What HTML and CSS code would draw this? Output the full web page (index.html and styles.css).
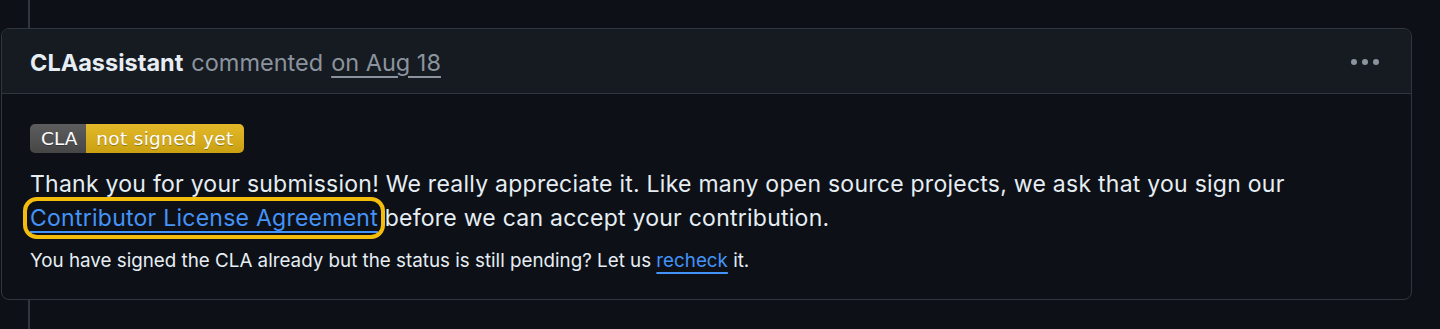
FILE: index.html
```html
<!DOCTYPE html>
<html lang="en">
<head>
<meta charset="utf-8">
<title>CLA comment</title>
<link rel="stylesheet" href="styles.css">
</head>
<body>
<div class="timeline timeline-top"></div>
<div class="comment">
  <div class="comment-header">
    <div class="comment-meta">
      <a class="author" href="#">CLAassistant</a>
      <span class="action">commented</span>
      <a class="date" href="#">on Aug 18</a>
    </div>
    <button class="more" aria-label="More">
      <svg width="30" height="8" viewBox="0 0 30 8"><circle cx="4" cy="4" r="3"/><circle cx="15" cy="4" r="3"/><circle cx="26" cy="4" r="3"/></svg>
    </button>
  </div>
  <div class="comment-body">
    <div class="badge"><span class="badge-label">CLA</span><span class="badge-value">not signed yet</span></div>
    <p class="message">Thank you for your submission! We really appreciate it. Like many open source projects, we ask that you sign our <a class="link focused" href="#">Contributor License Agreement</a> before we can accept your contribution.</p>
    <p class="note">You have signed the CLA already but the status is still pending? Let us <a class="link" href="#">recheck</a> it.</p>
  </div>
</div>
<div class="timeline timeline-bottom"></div>
</body>
</html>
```

FILE: styles.css
```css
html, body {
  margin: 0;
  padding: 0;
  background: #0d1117;
  height: 329px;
  overflow: hidden;
}
body {
  font-family: Inter, "Noto Sans", sans-serif;
  color: #e6edf3;
}
.timeline {
  margin-left: 28px;
  width: 0;
  border-left: 2px solid #30363d;
}
.timeline-top { height: 28px; }
.timeline-bottom { height: 40px; }
.comment {
  width: 1409px;
  margin-left: 1px;
  border: 1px solid #30363d;
  border-radius: 8px;
  overflow: hidden;
}
.comment-header {
  height: 65px;
  background: #161b22;
  border-bottom: 1px solid #30363d;
  display: flex;
  align-items: center;
  justify-content: space-between;
  padding: 2px 29px 0 28px;
  box-sizing: border-box;
}
.comment-meta {
  font-size: 23.5px;
  display: flex;
  gap: 8px;
  align-items: baseline;
}
.author {
  color: #e6edf3;
  font-weight: 700;
  text-decoration: none;
}
.action { color: #8b949e; }
.date {
  color: #8b949e;
  text-decoration: underline;
  text-underline-offset: 5px;
  text-decoration-thickness: 2px;
}
.more {
  background: none;
  border: 0;
  padding: 0;
  margin-right: 2px;
  display: flex;
}
.more svg { fill: #8b949e; }
.comment-body {
  padding: 30px 28px 27px;
}
.badge {
  display: inline-flex;
  height: 29px;
  border-radius: 5px;
  overflow: hidden;
  font-family: "DejaVu Sans", Verdana, sans-serif;
  font-size: 18.5px;
  color: #fff;
  text-shadow: 0 1px 0 rgba(1,1,1,0.3);
}
.badge span {
  display: flex;
  align-items: center;
}
.badge-label {
  background: linear-gradient(#5d5d5d, #464646);
  padding: 0 9px 0 11px;
}
.badge-value {
  background: linear-gradient(#e3b92a, #c9a011);
  padding: 0 10px 0 10px;
  letter-spacing: 0.3px;
}
.message {
  font-size: 23px;
  letter-spacing: 0.25px;
  line-height: 34px;
  margin: 14px 0 0;
}
.link {
  color: #4493f8;
  text-decoration: underline;
  text-underline-offset: 5px;
  text-decoration-thickness: 2px;
}
.focused {
  white-space: nowrap;
  border-radius: 10px;
  outline: 4px solid #f5bd0b;
  outline-offset: 0;
  padding: 3px;
  margin: 0 -3px;
}
.note {
  font-size: 18.8px;
  line-height: 22px;
  margin: 15px 0 0;
}
```
